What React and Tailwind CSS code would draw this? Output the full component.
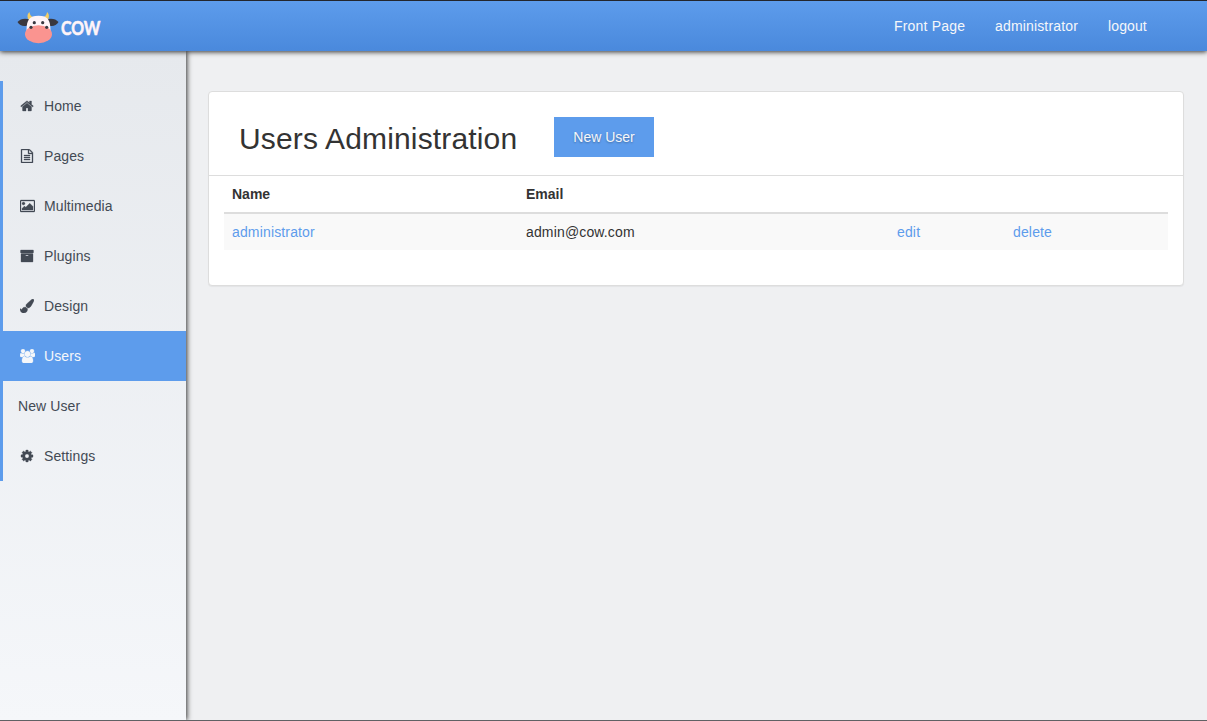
const icons = {
  home: { w: 1792, d: "M1472 992v480q0 26-19 45t-45 19h-384v-384h-256v384h-384q-26 0-45-19t-19-45v-480q0-1 .5-3t.5-3l575-474 575 474q1 2 1 6zm223-69l-62 74q-8 9-21 11h-3q-13 0-21-7l-692-577-692 577q-12 8-24 7-13-2-21-11l-62-74q-8-10-7-23.5t11-21.5l719-599q32-26 76-26t76 26l244 204v-195q0-14 9-23t23-9h192q14 0 23 9t9 23v408l219 182q10 8 11 21.5t-7 23.5z" },
  pages: { w: 1792, d: "M1596 380q28 28 48 76t20 88v1152q0 40-28 68t-68 28h-1344q-40 0-68-28t-28-68v-1600q0-40 28-68t68-28h896q40 0 88 20t76 48zm-444-244v376h376q-10-29-22-41l-313-313q-12-12-41-22zm384 1528v-1024h-416q-40 0-68-28t-28-68v-416h-768v1536h1280zm-1024-864q0-14 9-23t23-9h704q14 0 23 9t9 23v64q0 14-9 23t-23 9h-704q-14 0-23-9t-9-23v-64zm736 224q14 0 23 9t9 23v64q0 14-9 23t-23 9h-704q-14 0-23-9t-9-23v-64q0-14 9-23t23-9h704zm0 256q14 0 23 9t9 23v64q0 14-9 23t-23 9h-704q-14 0-23-9t-9-23v-64q0-14 9-23t23-9h704z" },
  image: { w: 1920, d: "M640 576q0 80-56 136t-136 56-136-56-56-136 56-136 136-56 136 56 56 136zm1024 384v448h-1408v-192l320-320 160 160 512-512zm96-704h-1600q-13 0-22.500 9.500t-9.500 22.500v1216q0 13 9.500 22.500t22.500 9.500h1600q13 0 22.500-9.500t9.500-22.500v-1216q0-13-9.500-22.500t-22.500-9.500zm160 32v1216q0 66-47 113t-113 47h-1600q-66 0-113-47t-47-113v-1216q0-66 47-113t113-47h1600q66 0 113 47t47 113z" },
  archive: { w: 1792, d: "M1088 832q0-26-19-45t-45-19h-256q-26 0-45 19t-19 45 19 45 45 19h256q26 0 45-19t19-45zm576-192v960q0 26-19 45t-45 19h-1408q-26 0-45-19t-19-45v-960q0-26 19-45t45-19h1408q26 0 45 19t19 45zm64-448v256q0 26-19 45t-45 19h-1536q-26 0-45-19t-19-45v-256q0-26 19-45t45-19h1536q26 0 45 19t19 45z" },
  brush: { w: 1792, d: "M1615 0q70 0 122.500 46.500t52.500 116.500q0 63-45 151-332 629-465 752-97 91-218 91-126 0-216.500-92.500t-90.500-219.500q0-128 92-212l638-579q59-54 130-54zm-909 1034q39 76 106.500 130t150.500 76l1 71q4 213-129.500 347t-348.500 134q-123 0-218-46.500t-152.500-127.500-86.500-183-29-220q7 5 41 30t62 44.500 59 36.500 46 17q41 0 55-37 25-66 57.500-112.500t69.500-76 88-47.500 103-25.500 125-10.500z" },
  users: { w: 1920, d: "M593 896q-162 5-265 128h-134q-82 0-138-40.500t-56-118.500q0-353 124-353 6 0 43.500 21t97.500 42.500 119 21.500q67 0 133-23-5 37-5 66 0 159 93 293zm1071 637q0 120-73 189.500t-194 69.500h-874q-121 0-194-69.500t-73-189.500q0-53 3.500-103.500t14-109 26.500-108.500 43-97.500 62-81 85.500-53.500 111.500-20q10 0 43 21.500t73 48 107 48 135 21.500 135-21.500 107-48 73-48 43-21.500q61 0 111.500 20t85.500 53.500 62 81 43 97.500 26.500 108.500 14 109 3.500 103.500zm-1024-1277q0 106-75 181t-181 75-181-75-75-181 75-181 181-75 181 75 75 181zm704 384q0 159-112.500 271.500t-271.500 112.500-271.500-112.500-112.500-271.500 112.500-271.500 271.500-112.500 271.500 112.500 112.500 271.500zm576 225q0 78-56 118.500t-138 40.500h-134q-103-123-265-128 93-134 93-293 0-29-5-66 66 23 133 23 59 0 119-21.500t97.500-42.500 43.500-21q124 0 124 353zm-128-609q0 106-75 181t-181 75-181-75-75-181 75-181 181-75 181 75 75 181z" },
  cog: { w: 1792, d: "M1152 896q0-106-75-181t-181-75-181 75-75 181 75 181 181 75 181-75 75-181zm512-109v222q0 12-8 23t-20 13l-185 28q-19 54-39 91 35 50 107 138 10 12 10 25t-9 23q-27 37-99 108t-94 71q-12 0-26-9l-138-108q-44 23-91 38-16 136-29 186-7 28-36 28h-222q-14 0-24.500-8.500t-11.500-21.500l-28-184q-49-16-90-37l-141 107q-10 9-25 9-14 0-25-11-126-114-165-168-7-10-7-23 0-12 8-23 15-21 51-66.500t54-70.500q-27-50-41-99l-183-27q-13-2-21-12.500t-8-23.500v-222q0-12 8-23t19-13l186-28q14-46 39-92-40-57-107-138-10-12-10-24 0-10 9-23 26-36 98.500-107.500t94.500-71.500q13 0 26 10l138 107q44-23 91-38 16-136 29-186 7-28 36-28h222q14 0 24.500 8.500t11.500 21.500l28 184q49 16 90 37l142-107q9-9 24-9 13 0 25 10 129 119 165 170 7 8 7 22 0 12-8 23-15 21-51 66.500t-54 70.500q26 50 41 98l183 28q13 2 21 12.500t8 23.500z" },
};

function Icon({ name }) {
  const { w, d } = icons[name];
  return (
    <span className="mr-2 flex w-[18px] justify-center">
      <svg width={w / 128} height="14" viewBox={`0 0 ${w} 1792`} fill="currentColor" stroke="currentColor" strokeWidth="40" aria-hidden="true">
        <path d={d} />
      </svg>
    </span>
  );
}

function CowLogo() {
  return (
    <svg className="overflow-visible" width="42" height="34" viewBox="0 0 42 34" aria-hidden="true">
      <path d="M11.500 10.500C9.800 7.500 10.500 4.500 12.500 3C12.700 5.500 14 7 15.800 8.500z" fill="#f3cd64" />
      <path d="M31 10.500C32.700 7.500 32 4.500 30 3C29.800 5.500 28.500 7 26.700 8.500z" fill="#f3cd64" />
      <path d="M12.500 10.500C8 8.700 3 9.800 .5 13C3 17.300 8 18.200 12 15.500z" fill="#393840" />
      <path d="M29.500 10.500C34 8.700 39 9.800 41.500 13C39 17.300 34 18.200 30 15.500z" fill="#393840" />
      <path d="M9.500 22C9.500 11 12 6.700 21.500 6.700S33.500 11 33.500 22z" fill="#fff4f8" />
      <ellipse cx="21.500" cy="25.200" rx="13.500" ry="9" fill="#fa9490" />
      <circle cx="17.300" cy="13.700" r="1.600" fill="#393840" />
      <circle cx="25.700" cy="13.700" r="1.600" fill="#393840" />
      <circle cx="14" cy="18.300" r="1.600" fill="#393840" />
      <circle cx="29.700" cy="18.300" r="1.600" fill="#393840" />
    </svg>
  );
}

const nav = [
  { label: "Home", icon: "home" },
  { label: "Pages", icon: "pages" },
  { label: "Multimedia", icon: "image" },
  { label: "Plugins", icon: "archive" },
  { label: "Design", icon: "brush" },
  { label: "Users", icon: "users", active: true },
  { label: "New User" },
  { label: "Settings", icon: "cog" },
];

export default function App() {
  return (
    <div className="flex h-[721px] w-full flex-col overflow-hidden border-t border-b border-t-[#23262d] border-b-[#606164] bg-[#eff0f2] font-['Liberation_Sans',Arial,sans-serif] text-sm leading-5 text-[#333]">
      <header className="relative z-20 flex h-[50px] shrink-0 items-center justify-between bg-linear-to-b from-[#5d9cec] to-[#4a89dc] pr-[60px] pl-[17px] shadow-[0_1px_5px_rgba(0,0,0,0.8)]">
        <a href="#" className="flex items-center gap-[2px]">
          <CowLogo />
          <span className="mt-[3px] origin-left scale-x-[0.88] font-[Lato,sans-serif] text-[18px] font-bold text-[#fff4f8] [-webkit-text-stroke:0.5px_#fff4f8]">COW</span>
        </a>
        <nav className="flex text-[#f5f7fa]">
          <a href="#" className="w-[101px] tracking-[0.2px]">Front Page</a>
          <a href="#" className="w-[113px] tracking-[0.16px]">administrator</a>
          <a href="#" className="w-[39px] tracking-[0.12px]">logout</a>
        </nav>
      </header>
      <div className="flex min-h-0 flex-1">
        <aside className="relative z-10 w-[186px] shrink-0 bg-linear-to-b from-[#e6e9ed] to-[#f5f7fa] pt-[30px] shadow-[1px_0_5px_rgba(0,0,0,0.8)]">
          <ul className="border-l-[3px] border-[#5d9cec]">
            {nav.map(({ label, icon, active }) => (
              <li key={label}>
                <a href="#" className={active ? "flex h-[50px] items-center bg-[#5d9cec] pl-[15px] tracking-[0.1px] text-[#f5f7fa]" : "flex h-[50px] items-center pl-[15px] tracking-[0.1px] text-[#434a54]"}>
                  {icon && <Icon name={icon} />}
                  {label}
                </a>
              </li>
            ))}
          </ul>
        </aside>
        <main className="flex-1 pt-10 pr-[23px] pl-[22px]">
          <section className="h-[195px] rounded border border-[#ddd] bg-white shadow-[0_1px_1px_rgba(0,0,0,0.05)]">
            <div className="flex h-[84px] items-start border-b border-[#ddd] pt-[25px] pl-[30px]">
              <h1 className="mt-[5px] w-[315px] text-[30px] leading-[33px] tracking-[0.16px]">Users Administration</h1>
              <a href="#" className="flex h-10 w-[100px] items-center justify-center bg-[#5d9cec] text-[#f5f7fa] [text-shadow:0_1px_2px_rgba(0,0,0,0.3)]">New User</a>
            </div>
            <div className="px-[15px]">
              <table className="w-full table-fixed border-separate border-spacing-0 text-left">
                <colgroup>
                  <col className="w-[294px]" />
                  <col className="w-[371px]" />
                  <col className="w-[116px]" />
                  <col />
                </colgroup>
                <thead>
                  <tr>
                    <th className="h-[38px] border-b-2 border-[#ddd] px-2">Name</th>
                    <th className="h-[38px] border-b-2 border-[#ddd] px-2">Email</th>
                    <th className="h-[38px] border-b-2 border-[#ddd]" />
                    <th className="h-[38px] border-b-2 border-[#ddd]" />
                  </tr>
                </thead>
                <tbody>
                  <tr className="h-9 bg-[#f9f9f9] tracking-[0.15px]">
                    <td className="px-2"><a href="#" className="text-[#5d9cec]">administrator</a></td>
                    <td className="px-2">admin@cow.com</td>
                    <td className="px-2"><a href="#" className="text-[#5d9cec]">edit</a></td>
                    <td className="px-2"><a href="#" className="text-[#5d9cec]">delete</a></td>
                  </tr>
                </tbody>
              </table>
            </div>
          </section>
        </main>
      </div>
    </div>
  );
}
